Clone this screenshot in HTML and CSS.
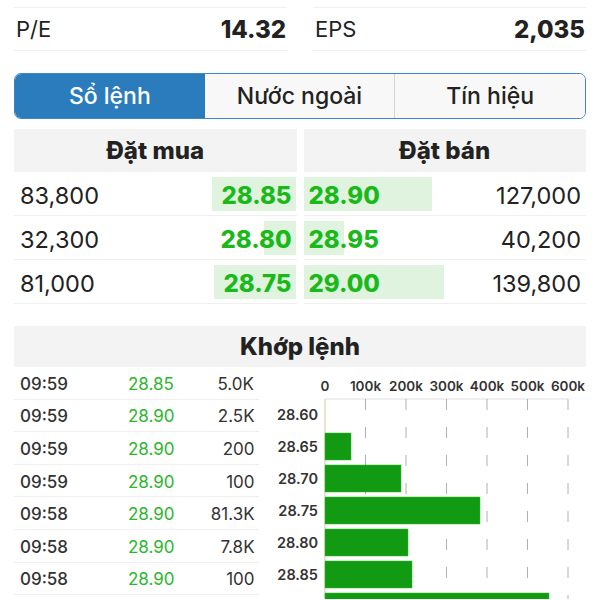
FILE: index.html
```html
<!DOCTYPE html>
<html>
<head>
  <meta charset="utf-8">
  <title>Sổ lệnh</title>
  <link rel="stylesheet" href="styles.css">
</head>
<body>
<div class="page">

  <!-- Chỉ số -->
  <div class="stats">
    <div class="stat"><span>P/E</span><b>14.32</b></div>
    <div class="stat"><span>EPS</span><b>2,035</b></div>
  </div>

  <!-- Tabs -->
  <div class="tabs">
    <div class="tab active">Sổ lệnh</div>
    <div class="tab">Nước ngoài</div>
    <div class="tab">Tín hiệu</div>
  </div>

  <!-- Sổ lệnh mua / bán -->
  <div class="book">
    <div class="side buy">
      <div class="side-head">Đặt mua</div>
      <div class="book-row"><span class="depth" style="width: 84px"></span><span class="qty">83,800</span><span class="price">28.85</span></div>
      <div class="book-row"><span class="depth" style="width: 32px"></span><span class="qty">32,300</span><span class="price">28.80</span></div>
      <div class="book-row"><span class="depth" style="width: 82px"></span><span class="qty">81,000</span><span class="price">28.75</span></div>
    </div>
    <div class="side sell">
      <div class="side-head">Đặt bán</div>
      <div class="book-row"><span class="depth" style="width: 128px"></span><span class="price">28.90</span><span class="qty">127,000</span></div>
      <div class="book-row"><span class="depth" style="width: 40px"></span><span class="price">28.95</span><span class="qty">40,200</span></div>
      <div class="book-row"><span class="depth" style="width: 140px"></span><span class="price">29.00</span><span class="qty">139,800</span></div>
    </div>
  </div>

  <!-- Khớp lệnh -->
  <div class="match">
    <div class="match-head">Khớp lệnh</div>
    <div class="match-body">
      <div class="trades">
        <div class="trade"><span class="time">09:59</span><span class="tprice">28.85</span><span class="vol">5.0K</span></div>
        <div class="trade"><span class="time">09:59</span><span class="tprice">28.90</span><span class="vol">2.5K</span></div>
        <div class="trade"><span class="time">09:59</span><span class="tprice">28.90</span><span class="vol">200</span></div>
        <div class="trade"><span class="time">09:59</span><span class="tprice">28.90</span><span class="vol">100</span></div>
        <div class="trade"><span class="time">09:58</span><span class="tprice">28.90</span><span class="vol">81.3K</span></div>
        <div class="trade"><span class="time">09:58</span><span class="tprice">28.90</span><span class="vol">7.8K</span></div>
        <div class="trade"><span class="time">09:58</span><span class="tprice">28.90</span><span class="vol">100</span></div>
      </div>

      <div class="chart">
        <svg width="316" height="232" viewBox="0 0 316 232">
          <g class="x-labels">
            <text x="55" y="24">0</text>
            <text x="95.5" y="24">100k</text>
            <text x="136" y="24">200k</text>
            <text x="176.5" y="24">300k</text>
            <text x="217" y="24">400k</text>
            <text x="257.5" y="24">500k</text>
            <text x="298" y="24">600k</text>
          </g>
          <line class="axis-top" x1="55" y1="32" x2="298" y2="32"/>
          <g class="grid">
            <line x1="95.5" y1="32" x2="95.5" y2="232"/>
            <line x1="136" y1="32" x2="136" y2="232"/>
            <line x1="176.5" y1="32" x2="176.5" y2="232"/>
            <line x1="217" y1="32" x2="217" y2="232"/>
            <line x1="257.5" y1="32" x2="257.5" y2="232"/>
            <line x1="298" y1="32" x2="298" y2="232"/>
          </g>
          <line class="axis-y" x1="55" y1="32" x2="55" y2="232"/>
          <g class="bars">
            <rect x="55" y="66" width="26" height="27"/>
            <rect x="55" y="98" width="76" height="27"/>
            <rect x="55" y="130" width="155" height="27"/>
            <rect x="55" y="162" width="83" height="27"/>
            <rect x="55" y="194" width="87" height="27"/>
            <rect x="55" y="226" width="224" height="27"/>
          </g>
          <g class="y-labels">
            <text x="48" y="53">28.60</text>
            <text x="48" y="85">28.65</text>
            <text x="48" y="117">28.70</text>
            <text x="48" y="149">28.75</text>
            <text x="48" y="181">28.80</text>
            <text x="48" y="213">28.85</text>
          </g>
        </svg>
      </div>
    </div>
  </div>

</div>
</body>
</html>
```

FILE: styles.css
```css
body {
  margin: 0;
  font-family: Inter, "Noto Sans", sans-serif;
  color: #222;
  background: #fff;
}

.page {
  padding: 0 14px;
}

/* chỉ số */
.stats {
  display: flex;
  gap: 26px;
  margin-top: 7px;
}

.stat {
  flex: 1;
  height: 42px;
  border-top: 1px solid #efefef;
  border-bottom: 1px solid #efefef;
  display: flex;
  align-items: center;
  justify-content: space-between;
  padding: 0 1px 0 2px;
  font-size: 22px;
}

.stat b {
  font-size: 24px;
  font-weight: 800;
}

/* tabs */
.tabs {
  display: flex;
  margin-top: 22px;
  height: 46px;
  border: 1.5px solid #3b88c6;
  border-radius: 7px;
  overflow: hidden;
  box-sizing: border-box;
}

.tab {
  flex: 1;
  display: flex;
  align-items: center;
  justify-content: center;
  background: #f8f8f8;
  font-size: 23px;
  font-weight: 500;
  color: #222;
}

.tab + .tab {
  border-left: 1px solid #d4d4d4;
}

.tab.active {
  background: #2b7cbd;
  color: #fff;
}

.tab.active + .tab {
  border-left: none;
}

/* sổ lệnh */
.book {
  display: flex;
  gap: 7px;
  margin-top: 10px;
}

.side {
  flex: 1;
}

.side-head {
  height: 43px;
  background: #f3f3f3;
  display: flex;
  align-items: center;
  justify-content: center;
  font-size: 24px;
  font-weight: 800;
}

.book-row {
  position: relative;
  height: 44px;
  box-sizing: border-box;
  border-bottom: 1px solid #efefef;
  display: flex;
  align-items: center;
  justify-content: space-between;
  padding-top: 3px;
  font-size: 23.5px;
}

.depth {
  position: absolute;
  top: 5px;
  bottom: 4px;
  background: #dff3df;
}

.buy .depth {
  right: 1px;
}

.sell .depth {
  left: 0;
}

.qty,
.price {
  position: relative;
}

.buy .book-row {
  padding-left: 6px;
  padding-right: 5px;
}

.sell .book-row {
  padding-left: 5px;
  padding-right: 5px;
}

.price {
  font-size: 24px;
  font-weight: 800;
  color: #19b919;
}

/* khớp lệnh */
.match {
  margin-top: 22px;
}

.match-head {
  height: 41px;
  background: #f3f3f3;
  display: flex;
  align-items: center;
  justify-content: center;
  font-size: 24px;
  font-weight: 800;
}

.match-body {
  display: flex;
  gap: 11px;
}

.trades {
  width: 245px;
}

.trade {
  display: grid;
  grid-template-columns: 108px 1fr 80px;
  align-items: center;
  height: 32.6px;
  box-sizing: border-box;
  border-bottom: 1px solid #efefef;
  padding: 2px 6px 0;
  font-size: 17px;
}

.time {
  font-weight: 500;
  color: #333;
}

.tprice {
  color: #2db52d;
}

.vol {
  text-align: right;
  color: #333;
}

.chart svg {
  display: block;
}

.x-labels text {
  font-size: 13.5px;
  font-weight: 600;
  fill: #333;
  text-anchor: middle;
}

.y-labels text {
  font-size: 14.5px;
  font-weight: 600;
  fill: #333;
  text-anchor: end;
}

.axis-top {
  stroke: #dedede;
  stroke-width: 1;
}

.axis-y {
  stroke: #d8c79a;
  stroke-width: 1;
}

.grid line {
  stroke: #b0b0b0;
  stroke-width: 1;
  stroke-dasharray: 11 17;
}

.bars rect {
  fill: #129a12;
  stroke: #2fb82f;
  stroke-width: 0.5;
}
```
